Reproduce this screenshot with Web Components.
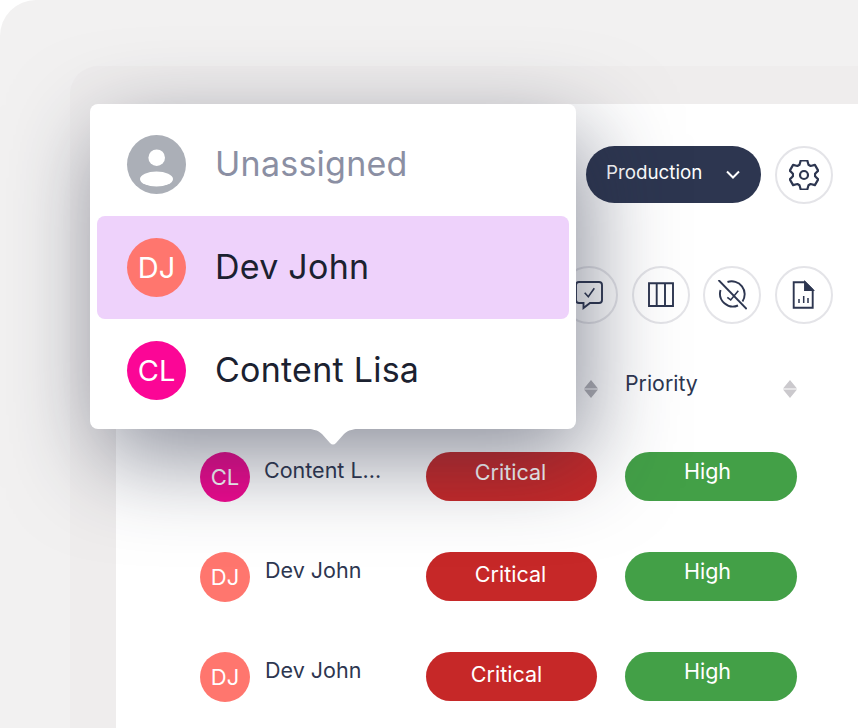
<!doctype html>
<html>

<head>
  <title>Assignee menu</title>
  <style>
    body {
      margin: 0;
      background: #fff;
      font-family: "Inter", "Liberation Sans", sans-serif;
    }
  </style>
</head>

<body>

  <app-frame>
    <div slot="top" class="bar">
      <env-select>Production</env-select>
      <icon-button icon="gear"></icon-button>
    </div>
    <icon-button slot="tools" icon="chat"></icon-button>
    <icon-button slot="tools" icon="columns"></icon-button>
    <icon-button slot="tools" icon="nocheck"></icon-button>
    <icon-button slot="tools" icon="report"></icon-button>

    <table-head slot="table"></table-head>
    <table-row slot="table" first initials="CL" color="#f0088f" name="Content L..." priority="High"></table-row>
    <table-row slot="table" initials="DJ" color="#ff766e" name="Dev John" priority="High"></table-row>
    <table-row slot="table" nudge initials="DJ" color="#ff766e" name="Dev John" priority="High"></table-row>

    <assignee-menu slot="overlay">
      <menu-item>
        <user-avatar slot="avatar" size="59" font="29" blank></user-avatar>
        <span class="muted">Unassigned</span>
      </menu-item>
      <menu-item active>
        <user-avatar slot="avatar" size="59" font="29" color="#ff766e">DJ</user-avatar>
        Dev John
      </menu-item>
      <menu-item>
        <user-avatar slot="avatar" size="59" font="29" color="#fb0696">CL</user-avatar>
        Content Lisa
      </menu-item>
    </assignee-menu>
  </app-frame>

  <template id="frame-tmpl">
    <style>
      :host {
        display: block;
        width: 858px;
        height: 728px;
        overflow: hidden;
      }
      .outer {
        height: 100%;
        box-sizing: border-box;
        padding: 66px 0 0 70px;
        background: #f2f1f1;
        border-top-left-radius: 36px;
      }
      .mid {
        height: 100%;
        box-sizing: border-box;
        padding: 38px 0 0 46px;
        background: #efeded;
        border-top-left-radius: 28px;
      }
      .panel {
        position: relative;
        height: 100%;
        background: #fff;
        border-top-left-radius: 6px;
      }
      .top {
        display: flex;
        justify-content: flex-end;
        padding: 42px 25px 0 0;
      }
      .tools {
        display: flex;
        justify-content: flex-end;
        gap: 13.600px;
        padding: 62px 25px 0 0;
      }
      ::slotted(.bar) {
        display: flex;
        gap: 14px;
      }
    </style>
    <div class="outer">
      <div class="mid">
        <div class="panel">
          <div class="top"><slot name="top"></slot></div>
          <div class="tools"><slot name="tools"></slot></div>
          <slot name="table"></slot>
          <slot name="overlay"></slot>
        </div>
      </div>
    </div>
  </template>

  <template id="menu-tmpl">
    <style>
      :host {
        position: absolute;
        left: -26px;
        top: 0;
        width: 486px;
        height: 325px;
        box-sizing: border-box;
        padding: 9px 7px;
        background: #fff;
        border-radius: 8px;
        box-shadow: 10px 30px 90px rgba(36, 42, 66, .52);
        z-index: 5;
      }
      svg {
        position: absolute;
        left: 211px;
        top: 324px;
      }
    </style>
    <slot></slot>
    <svg width="64" height="18" viewBox="0 0 64 18">
      <path fill="#fff" d="M0 0H64C52 1 47 2 43 6L35 15C33 17 31 17 29 15L21 6C17 2 12 1 0 0Z" />
    </svg>
  </template>

  <template id="item-tmpl">
    <style>
      :host {
        display: flex;
        align-items: center;
        gap: 29px;
        height: 103px;
        padding-left: 30px;
        border-radius: 8px;
        font-size: 34px;
        letter-spacing: .250px;
        color: #1b2130;
      }
      :host([active]) {
        background: #eed2fb;
      }
      ::slotted(.muted) {
        color: #8b8fa3;
      }
      .label {
        padding-bottom: 2px;
      }
    </style>
    <slot name="avatar"></slot>
    <span class="label"><slot></slot></span>
  </template>

  <template id="avatar-tmpl">
    <style>
      :host {
        display: flex;
        flex: none;
        align-items: center;
        justify-content: center;
        border-radius: 50%;
        color: #fff;
        letter-spacing: 0;
        overflow: hidden;
      }
      svg {
        display: block;
      }
    </style>
    <slot></slot>
  </template>

  <template id="head-tmpl">
    <style>
      :host {
        display: grid;
        grid-template-columns: 310px 199px 172px;
        height: 128px;
        padding-top: 46px;
        box-sizing: border-box;
        font-size: 21.300px;
        color: #2d3650;
      }
      .cell {
        display: flex;
        justify-content: space-between;
        align-items: flex-start;
        grid-column: 2;
        padding-right: 27px;
      }
      .cell+.cell {
        grid-column: 3;
        padding-right: 0;
      }
      svg {
        margin-top: 10px;
      }
    </style>
    <div class="cell"><span></span><svg width="14" height="18" viewBox="0 0 14 18">
        <path fill="#b0b0b5" d="M7 0L14 8.500H0ZM0 9.500H14L7 18Z" />
      </svg></div>
    <div class="cell"><span>Priority</span><svg width="14" height="18" viewBox="0 0 14 18">
        <path fill="#cbc9cd" d="M7 0L14 8.500H0ZM0 9.500H14L7 18Z" />
      </svg></div>
  </template>

  <template id="row-tmpl">
    <style>
      :host {
        display: grid;
        grid-template-columns: 84px 226px 199px 172px;
        height: 100px;
        font-size: 21.500px;
        color: #2d3650;
      }
      .who {
        display: flex;
        gap: 15px;
        grid-column: 2;
      }
      .name {
        padding-top: 5px;
        white-space: nowrap;
      }
      :host([first]) .name {
        margin-left: -1px;
      }
      .pill {
        display: flex;
        align-items: center;
        justify-content: center;
        height: 49px;
        box-sizing: border-box;
        border-radius: 25px;
        color: #fff;
      }
      .critical {
        width: 171px;
        padding: 0 2px 5px 0;
        background: #c62828;
      }
      :host([first]) .critical {
        padding-bottom: 9px;
      }
      :host([nudge]) .critical {
        padding-right: 10px;
      }
      .high {
        width: 172px;
        padding: 0 7px 11px 0;
        background: #43a047;
      }
    </style>
    <div class="who"><user-avatar size="50" font="22" id="av"></user-avatar><span class="name"></span></div>
    <div class="pill critical">Critical</div>
    <div class="pill high"></div>
  </template>

  <template id="select-tmpl">
    <style>
      :host {
        display: flex;
        align-items: center;
        width: 175px;
        height: 57px;
        box-sizing: border-box;
        padding: 0 21px 0 20px;
        justify-content: space-between;
        background: #2d3650;
        border-radius: 29px;
        color: #fff;
        font-size: 18.800px;
      }
      span {
        padding-bottom: 5px;
      }
    </style>
    <span><slot></slot></span>
    <svg width="14" height="9" viewBox="0 0 14 9" fill="none" stroke="#fff" stroke-width="2">
      <path d="M1 1.500L7 7.500L13 1.500" />
    </svg>
  </template>

  <script>
    // six flat teeth round the centre of the 30x30 box
    function gearPath() {
      let d = '';
      for (let i = 0; i < 6; i++) {
        const a = (i * 60 - 90) * Math.PI / 180;
        const pt = (r, s) => (15 + r * Math.cos(a) - s * Math.sin(a)).toFixed(2) + ' ' + (15 + r * Math.sin(a) + s * Math.cos(a)).toFixed(2);
        d += (i ? 'L' : 'M') + pt(10.200, -4.500) + 'L' + pt(14.500, -3.300) + 'L' + pt(14.500, 3.300) + 'L' + pt(10.200, 4.500);
      }
      return d + 'Z';
    }

    // every icon sits in a 30x30 box, stroked in the navy of the table text
    const ICONS = {
      gear: `<path stroke-linejoin="round" stroke-width="2.200" d="${gearPath()}"/><circle cx="15" cy="15" r="4" stroke-width="2.200"/>`,
      chat: `<path d="M5 2H25C26.700 2 28 3.300 28 5V20C28 21.700 26.700 23 25 23H16L9.500 28V23H5C3.300 23 2 21.700 2 20V5C2 3.300 3.300 2 5 2Z"/><path stroke-width="1.600" d="M10.700 12.700L14.300 16.700L20.300 8.300"/>`,
      columns: `<path d="M3 3.300H27V26H3ZM10.700 3.300V26M19 3.300V26"/>`,
      nocheck: `<path d="M10.500 2A13 13 0 0 1 25.500 21.500M21 25.500A13 13 0 0 1 3.500 10"/><path d="M1.500 0L29.700 29"/><path stroke-width="1.600" d="M10.300 17.300L13.700 20L21.300 10.700"/>`,
      report: `<path d="M4.700 2.300H16L23.700 10V27.700H4.700Z"/><path fill="#2d3650" d="M16 2.300V10H23.700Z"/><path stroke-width="1.500" d="M10 23V19M14.700 23V16M19 23V18"/>`
    };

    customElements.define('app-frame', class extends HTMLElement {
      connectedCallback() {
        this.attachShadow({ mode: 'open' });
        this.shadowRoot.append(document.getElementById('frame-tmpl').content.cloneNode(true));
      }
    });

    customElements.define('assignee-menu', class extends HTMLElement {
      connectedCallback() {
        this.attachShadow({ mode: 'open' });
        this.shadowRoot.append(document.getElementById('menu-tmpl').content.cloneNode(true));
      }
    });

    customElements.define('menu-item', class extends HTMLElement {
      connectedCallback() {
        this.attachShadow({ mode: 'open' });
        this.shadowRoot.append(document.getElementById('item-tmpl').content.cloneNode(true));
      }
    });

    customElements.define('user-avatar', class extends HTMLElement {
      connectedCallback() {
        this.attachShadow({ mode: 'open' });
        this.shadowRoot.append(document.getElementById('avatar-tmpl').content.cloneNode(true));
        const size = +this.getAttribute('size');
        this.style.width = this.style.height = size + 'px';
        this.style.fontSize = this.getAttribute('font') + 'px';
        if (this.hasAttribute('color')) this.style.background = this.getAttribute('color');
        if (this.hasAttribute('blank')) {
          this.style.background = '#abafb7';
          // person silhouette for the unassigned entry
          this.shadowRoot.querySelector('slot').insertAdjacentHTML('afterend', `<svg width="${size}" height="${size}" viewBox="0 0 59 59" fill="#fff">
            <circle cx="29.700" cy="22.700" r="8.300"/><ellipse cx="29.500" cy="44" rx="16.500" ry="7.500"/></svg>`);
        }
      }
    });

    customElements.define('icon-button', class extends HTMLElement {
      connectedCallback() {
        this.attachShadow({ mode: 'open' });
        this.shadowRoot.innerHTML = `<style>
          :host {
            display: flex;
            align-items: center;
            justify-content: center;
            width: 58px;
            height: 58px;
            box-sizing: border-box;
            border: 2px solid #e4e4e8;
            border-radius: 50%;
          }
        </style>
        <svg width="30" height="30" viewBox="0 0 30 30" fill="none" stroke="#2d3650" stroke-width="1.900">${ICONS[this.getAttribute('icon')]}</svg>`;
      }
    });

    customElements.define('env-select', class extends HTMLElement {
      connectedCallback() {
        this.attachShadow({ mode: 'open' });
        this.shadowRoot.append(document.getElementById('select-tmpl').content.cloneNode(true));
      }
    });

    customElements.define('table-head', class extends HTMLElement {
      connectedCallback() {
        this.attachShadow({ mode: 'open' });
        this.shadowRoot.append(document.getElementById('head-tmpl').content.cloneNode(true));
      }
    });

    customElements.define('table-row', class extends HTMLElement {
      connectedCallback() {
        this.attachShadow({ mode: 'open' });
        this.shadowRoot.append(document.getElementById('row-tmpl').content.cloneNode(true));
        const root = this.shadowRoot;
        const av = root.getElementById('av');
        av.style.background = this.getAttribute('color');
        av.textContent = this.getAttribute('initials');
        root.querySelector('.name').textContent = this.getAttribute('name');
        root.querySelector('.high').textContent = this.getAttribute('priority');
      }
    });
  </script>
</body>

</html>
